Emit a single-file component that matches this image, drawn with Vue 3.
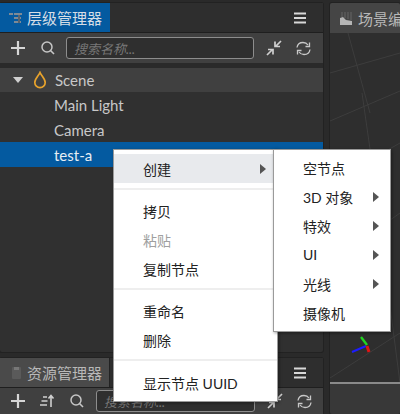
<script setup>
const nodes = [
  { name: 'Main Light' },
  { name: 'Camera' },
]
const groups = [
  [{ label: '创建', hover: true, arrow: true }],
  [{ label: '拷贝' }, { label: '粘贴', disabled: true }, { label: '复制节点' }],
  [{ label: '重命名' }, { label: '删除' }],
  [{ label: '显示节点 UUID' }],
]
const subItems = [
  { label: '空节点' },
  { label: '3D 对象', arrow: true },
  { label: '特效', arrow: true },
  { label: 'UI', arrow: true },
  { label: '光线', arrow: true },
  { label: '摄像机' },
]
</script>

<template>
  <div class="app">
    <div class="left">
      <section class="panel top-panel">
        <header class="tabbar">
          <div class="tab active">
            <svg class="tab-icon" width="14" height="14" viewBox="0 0 14 14">
              <path d="M0 2h4v2H0zM5 2h8v2H5zM5 6h7v2H5zM5 10h7v2H5z" fill="#7d8a96"/>
              <path d="M10 4v8" stroke="#59636d" stroke-width="2"/>
            </svg>
            <span>层级管理器</span>
          </div>
          <div class="tab-fill">
            <svg class="menu-icon" width="14" height="12" viewBox="0 0 14 12"><path d="M1 1.500h12M1 6h12M1 10.500h12" stroke="#d8d8d8" stroke-width="1.800"/></svg>
          </div>
        </header>
        <div class="toolbar">
          <svg class="plus" width="16" height="16" viewBox="0 0 16 16"><path d="M8 1v14M1 8h14" stroke="#d6d6d6" stroke-width="2.200"/></svg>
          <svg class="search" width="16" height="16" viewBox="0 0 16 16"><circle cx="7" cy="7" r="5" fill="none" stroke="#c6c6c6" stroke-width="1.500"/><path d="M10.500 10.500l3.500 3.500" stroke="#c6c6c6" stroke-width="1.600"/></svg>
          <div class="input"><span>搜索名称...</span></div>
          <svg class="shrink" width="16" height="16" viewBox="0 0 16 16"><path d="M1 15l5-5M2 9.500h5v5M15 1l-5 5M14 6.500H9v-5" fill="none" stroke="#cfcfcf" stroke-width="1.700"/></svg>
          <svg class="refresh" width="15" height="15" viewBox="0 0 15 15"><path d="M1 6.500C1.500 3 4 1.500 7 1.500c2.500 0 4 1 5 2.500M14 8.500c-.5 3.500-3 5-6 5-2.500 0-4-1-5-2.500" fill="none" stroke="#c8c8c8" stroke-width="1.300"/><path d="M13.500 1.500V5.500H9.500M1.500 13.500V9.500H5.500" fill="none" stroke="#c8c8c8" stroke-width="1.300"/></svg>
        </div>
        <div class="tree">
          <div class="row scene-row">
            <span class="caret"></span>
            <svg class="drop" width="14" height="18" viewBox="0 0 14 18"><path d="M7 1.500C5.500 5 1.800 7.800 1.800 11.500a5.200 5.200 0 0 0 10.400 0C12.200 7.800 8.500 5 7 1.500z" fill="none" stroke="#e8a32c" stroke-width="1.700"/></svg>
            <span class="label scene-label">Scene</span>
          </div>
          <div v-for="n in nodes" :key="n.name" class="row child"><span class="label">{{ n.name }}</span></div>
          <div class="row child selected"><span class="label">test-a</span></div>
        </div>
      </section>

      <section class="panel bottom-panel">
        <header class="tabbar">
          <div class="tab inactive">
            <svg class="tab-icon" width="12" height="14" viewBox="0 0 12 14"><rect x="1" y="1" width="9" height="12" rx="1" fill="#5a5a5a"/><path d="M3 1h5v3H3z" fill="#777"/></svg>
            <span>资源管理器</span>
          </div>
          <div class="tab-fill">
            <svg class="menu-icon" width="14" height="12" viewBox="0 0 14 12"><path d="M1 1.500h12M1 6h12M1 10.500h12" stroke="#d8d8d8" stroke-width="1.800"/></svg>
          </div>
        </header>
        <div class="toolbar lower">
          <svg class="plus" width="16" height="16" viewBox="0 0 16 16"><path d="M8 1v14M1 8h14" stroke="#d6d6d6" stroke-width="2.200"/></svg>
          <svg class="sort" width="16" height="14" viewBox="0 0 16 14"><path d="M4 3h4M2.500 7h6M1 11h7" stroke="#cfcfcf" stroke-width="1.600"/><path d="M12 13V2M9.500 4.500L12 1.500l2.500 3" fill="none" stroke="#cfcfcf" stroke-width="1.600"/></svg>
          <svg class="search" width="16" height="16" viewBox="0 0 16 16"><circle cx="7" cy="7" r="5" fill="none" stroke="#c6c6c6" stroke-width="1.500"/><path d="M10.500 10.500l3.500 3.500" stroke="#c6c6c6" stroke-width="1.600"/></svg>
          <div class="input"><span>搜索名称...</span></div>
          <svg class="shrink" width="16" height="16" viewBox="0 0 16 16"><path d="M1 15l5-5M2 9.500h5v5M15 1l-5 5M14 6.500H9v-5" fill="none" stroke="#cfcfcf" stroke-width="1.700"/></svg>
          <svg class="refresh" width="15" height="15" viewBox="0 0 15 15"><path d="M1 6.500C1.500 3 4 1.500 7 1.500c2.500 0 4 1 5 2.500M14 8.500c-.5 3.500-3 5-6 5-2.500 0-4-1-5-2.500" fill="none" stroke="#c8c8c8" stroke-width="1.300"/><path d="M13.500 1.500V5.500H9.500M1.500 13.500V9.500H5.500" fill="none" stroke="#c8c8c8" stroke-width="1.300"/></svg>
        </div>
      </section>
    </div>

    <section class="panel scene-panel">
      <header class="scene-head">
        <svg class="scene-icon" width="12" height="13" viewBox="0 0 12 13"><path d="M0 13V6l3-1 3 3 6 1v4z" fill="#b5b5b5"/><path d="M2 0v5M5 0v6M8 0v7M11 0v8" stroke="#666" stroke-width="1"/></svg>
        <span>场景编辑器</span>
      </header>
      <div class="canvas">
        <svg class="grid" width="70" height="380" viewBox="0 0 70 380">
          <g stroke="#3d3d3d" fill="none">
            <path d="M0 40L70 20M0 88L70 58M0 150L70 110M0 230L70 180M0 345L70 300"/>
            <path d="M18 0L40 80M32 60L52 200M48 180L70 350"/>
          </g>
          <path d="M36 313L22 319" stroke="#1c1cff" stroke-width="2"/>
          <path d="M37 312L31 304" stroke="#22d422" stroke-width="2.400"/>
          <path d="M37 313L39 319" stroke="#e01515" stroke-width="3"/>
        </svg>
        <div class="scene-footer"></div>
      </div>
    </section>

    <div class="menu main-menu">
      <div v-for="(g, i) in groups" :key="i" class="group">
        <div v-for="item in g" :key="item.label" class="item" :class="{ hover: item.hover, disabled: item.disabled }">
          <span>{{ item.label }}</span>
          <i v-if="item.arrow" class="arrow"></i>
        </div>
      </div>
    </div>
    <div class="menu sub-menu">
      <div v-for="item in subItems" :key="item.label" class="item">
        <span>{{ item.label }}</span>
        <i v-if="item.arrow" class="arrow"></i>
      </div>
    </div>
  </div>
</template>

<style>
html, body { margin: 0; padding: 0; background: #2b2b2b; }
</style>

<style scoped>
.app {
  position: relative;
  width: 400px;
  height: 414px;
  overflow: hidden;
  display: flex;
  background: #2a2a2a;
  font-family: "Lato", "Noto Sans CJK SC", sans-serif;
  font-size: 15px;
}
.left {
  width: 323px;
  flex: none;
  display: flex;
  flex-direction: column;
  gap: 6px;
  padding-top: 3px;
}
.panel { background: #303030; box-shadow: 0 0 0 1px #222; border-radius: 2px; }
.top-panel { height: 349px; flex: none; }
.bottom-panel { flex: 1; background: #3c3c3c; }
.tabbar { display: flex; height: 29px; background: #2e2e2e; border-bottom: 1px solid #1f1f1f; }
.tab {
  display: flex;
  align-items: center;
  gap: 4px;
  height: 29px;
  padding: 0 9px;
  width: 110px;
  box-sizing: border-box;
  font-size: 15px;
  white-space: nowrap;
  flex: none;
}
.tab svg, .toolbar svg, .row svg, .scene-head svg { flex: none; }
.tab.active { background: #045aa0; color: #d6dee6; }
.tab.inactive { background: #4a4a4a; color: #b8b8b8; border-right: 1px solid #222; }
.tab.inactive .tab-icon { margin-left: 2px; margin-right: 0; }
.tab-fill { flex: 1; display: flex; justify-content: flex-end; align-items: center; padding-right: 16px; }
.toolbar {
  display: flex;
  align-items: center;
  height: 30px;
  padding-left: 10px;
  background: #404040;
}
.toolbar .search { margin-left: 14px; }
.input {
  width: 179px;
  height: 20px;
  margin-left: 10px;
  border: 1px solid #8d8d8d;
  border-radius: 3px;
  background: #2f2f2f;
  display: flex;
  align-items: center;
  padding-left: 7px;
  color: #777;
  font-style: italic;
  font-size: 13px;
  flex: none;
}
.shrink { margin-left: 12px; }
.refresh { margin-left: 14px; }
.tree { border-top: 5px solid #2a2a2a; }
.row { display: flex; align-items: center; height: 25px; color: #c8c8c8; box-sizing: border-box; }
.scene-row { background: #404040; height: 24px; padding-left: 13px; }
.caret {
  width: 0;
  height: 0;
  border-left: 5px solid transparent;
  border-right: 5px solid transparent;
  border-top: 6px solid #d0d0d0;
  margin-right: 10px;
}
.scene-label { margin-left: 8px; }
.child { padding-left: 54px; }
.selected { background: #045aa0; color: #e8eef4; }
.lower { height: 26px; }
.lower .sort { margin-left: 13px; }
.lower .search { margin-left: 14px; }
.lower .input { width: 150px; margin-left: 11px; }
.scene-panel {
  flex: 1;
  margin: 3px 0 0 7px;
  background: #2e2e2e;
  overflow: hidden;
}
.scene-head {
  display: flex;
  align-items: center;
  gap: 6px;
  height: 30px;
  padding-left: 10px;
  background: #454545;
  color: #b8b8b8;
  font-size: 15px;
  white-space: nowrap;
  overflow: hidden;
}
.canvas { position: relative; height: 381px; }
.grid { position: absolute; left: 0; top: 0; }
.scene-footer {
  position: absolute;
  left: 0; right: 0; top: 349px; bottom: 0;
  background: #383838;
  border-top: 2px solid #8a8a8a;
}
.menu {
  position: absolute;
  background: #fff;
  border: 1px solid #9a9a9a;
  box-shadow: 1px 1px 3px rgba(0,0,0,.4);
  box-sizing: border-box;
  color: #222;
  font-size: 14px;
}
.main-menu { left: 113px; top: 149px; width: 165px; height: 253px; padding-top: 4px; }
.group + .group { border-top: 2px solid #eee; margin-top: 5px; padding-top: 6px; }
.main-menu .item { height: 29px; padding: 0 11px 0 29px; }
.main-menu .group:last-child { padding-top: 7px; }
.item { display: flex; align-items: center; justify-content: space-between; white-space: nowrap; }
.hover { background: #e8eaed; }
.disabled { color: #a0a0a0; }
.arrow {
  width: 0;
  height: 0;
  border-top: 5px solid transparent;
  border-bottom: 5px solid transparent;
  border-left: 6px solid #555;
}
.sub-menu { left: 273px; top: 149px; width: 118px; height: 183px; padding-top: 3px; }
.sub-menu .item { height: 29px; padding: 0 11px 0 29px; }
</style>
